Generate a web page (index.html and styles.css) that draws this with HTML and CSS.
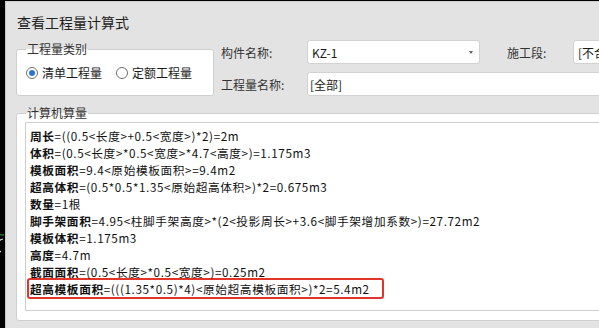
FILE: index.html
```html
<!DOCTYPE html>
<html lang="zh">
<head>
<meta charset="utf-8">
<link rel="stylesheet" href="styles.css">
</head>
<body>
<div class="canvas">
  <svg class="cad" width="24" height="40" viewBox="0 0 24 40"><path d="M7 10 A10 10 0 0 0 2 30" fill="none" stroke="#2fae3a" stroke-width="1"/><path d="M6 14 A7 7 0 0 0 4 27" fill="none" stroke="#e8e8e8" stroke-width="1.2"/></svg>
</div>
<div class="dialog">
  <div class="title">查看工程量计算式</div>
  <div class="top">
    <div class="group type-group">
      <span class="legend">工程量类别</span>
      <div class="radios">
        <label class="radio"><span class="dot checked"></span>清单工程量</label>
        <label class="radio"><span class="dot"></span>定额工程量</label>
      </div>
    </div>
    <div class="form">
      <div class="row">
        <span class="lbl">构件名称:</span>
        <div class="field combo"><span>KZ-1</span><span class="arrow"></span></div>
        <span class="lbl lbl2">施工段:</span>
        <div class="field seg"><span>[不合并]</span></div>
      </div>
      <div class="row">
        <span class="lbl">工程量名称:</span>
        <div class="field wide"><span>[全部]</span></div>
      </div>
    </div>
  </div>
  <div class="group calc-group">
    <span class="legend">计算机算量</span>
    <div class="textarea">
      <div class="line"><b>周长</b>=((0.5&lt;长度&gt;+0.5&lt;宽度&gt;)*2)=2m</div>
      <div class="line"><b>体积</b>=(0.5&lt;长度&gt;*0.5&lt;宽度&gt;*4.7&lt;高度&gt;)=1.175m3</div>
      <div class="line"><b>模板面积</b>=9.4&lt;原始模板面积&gt;=9.4m2</div>
      <div class="line"><b>超高体积</b>=(0.5*0.5*1.35&lt;原始超高体积&gt;)*2=0.675m3</div>
      <div class="line"><b>数量</b>=1根</div>
      <div class="line"><b>脚手架面积</b>=4.95&lt;柱脚手架高度&gt;*(2&lt;投影周长&gt;+3.6&lt;脚手架增加系数&gt;)=27.72m2</div>
      <div class="line"><b>模板体积</b>=1.175m3</div>
      <div class="line"><b>高度</b>=4.7m</div>
      <div class="line"><b>截面面积</b>=(0.5&lt;长度&gt;*0.5&lt;宽度&gt;)=0.25m2</div>
      <div class="line hl"><b>超高模板面积</b>=(((1.35*0.5)*4)&lt;原始超高模板面积&gt;)*2=5.4m2</div>
    </div>
  </div>
</div>
</body>
</html>
```

FILE: styles.css
```css
html, body {
  margin: 0;
  padding: 0;
  background: #000;
  width: 599px;
  height: 328px;
  overflow: hidden;
  font-family: "Noto Sans CJK SC", "Noto Sans", sans-serif;
  color: #1a1a1a;
}
body {
  display: flex;
}
.canvas {
  width: 5px;
  flex: none;
  position: relative;
}
.cad {
  position: absolute;
  left: -3px;
  top: 225px;
}
.dialog {
  flex: none;
  width: 620px;
  height: 327px;
  margin-top: 1px;
  background: #e3e3e3;
  border-left: 1px solid #c8c8c8;
  border-top: 1px solid #d0d0d0;
  padding-left: 10px;
  box-sizing: border-box;
  overflow: hidden;
}
.title {
  font-size: 14px;
  line-height: 20px;
  margin-top: 10px;
  margin-left: 1px;
  color: #222;
}
.top {
  display: flex;
  margin-top: 8px;
  height: 56px;
}
.group {
  position: relative;
  background: #fff;
  border: 1px solid #cfcfcf;
  border-radius: 3px;
  box-sizing: border-box;
}
.legend {
  position: absolute;
  left: 9px;
  top: -9px;
  font-size: 12px;
  line-height: 16px;
  color: #333;
  background: linear-gradient(#e3e3e3 0 8px, #fff 8px);
  padding: 0 1px;
  white-space: nowrap;
}
.type-group {
  flex: none;
  margin-top: 9px;
  width: 198px;
  height: 47px;
}
.radios {
  display: flex;
  gap: 14px;
  padding: 15px 0 0 9px;
}
.radio {
  display: flex;
  align-items: center;
  font-size: 12px;
  line-height: 16px;
  color: #1a1a1a;
  white-space: nowrap;
}
.dot {
  width: 12px;
  height: 12px;
  border: 1px solid #707070;
  border-radius: 50%;
  box-sizing: border-box;
  margin-right: 4px;
  display: flex;
  align-items: center;
  justify-content: center;
  background: #fff;
  flex: none;
}
.dot.checked::after {
  content: "";
  width: 6px;
  height: 6px;
  border-radius: 50%;
  background: #2a78d6;
}
.form {
  flex: none;
  margin-left: 7px;
  display: flex;
  flex-direction: column;
  gap: 8px;
}
.row {
  display: flex;
  align-items: center;
  height: 24px;
}
.lbl {
  width: 86px;
  font-size: 12px;
  color: #333;
  flex: none;
  white-space: nowrap;
}
.lbl2 {
  width: 66px;
  margin-left: 27px;
}
.field {
  height: 24px;
  background: #fff;
  border: 1px solid #d2d2d2;
  border-radius: 3px;
  box-sizing: border-box;
  display: flex;
  align-items: center;
  padding-left: 4px;
  font-size: 12px;
  color: #1a1a1a;
  flex: none;
  position: relative;
  white-space: nowrap;
  overflow: hidden;
}
.combo {
  width: 173px;
}
.arrow {
  position: absolute;
  right: 6px;
  top: 10px;
  width: 0;
  height: 0;
  border-left: 2.5px solid transparent;
  border-right: 2.5px solid transparent;
  border-top: 3px solid #666;
}
.seg {
  width: 80px;
}
.wide {
  width: 320px;
  padding-left: 2px;
}
.calc-group {
  margin-top: 17px;
  width: 620px;
  height: 208px;
  padding: 8px 0 0 8px;
}
.textarea {
  height: 189px;
  border: 1px solid #cfcfcf;
  box-sizing: border-box;
  padding: 4px 0 0 4px;
  font-size: 11.7px;
  letter-spacing: 0.6px;
  line-height: 17px;
  color: #111;
}
.line {
  white-space: nowrap;
  height: 17px;
}
.line b {
  font-weight: 700;
}
.hl {
  width: fit-content;
  border: 2px solid #e3342b;
  border-radius: 3px;
  margin: -2px 0 -2px -3px;
  padding: 0 12px 0 1px;
}
```
